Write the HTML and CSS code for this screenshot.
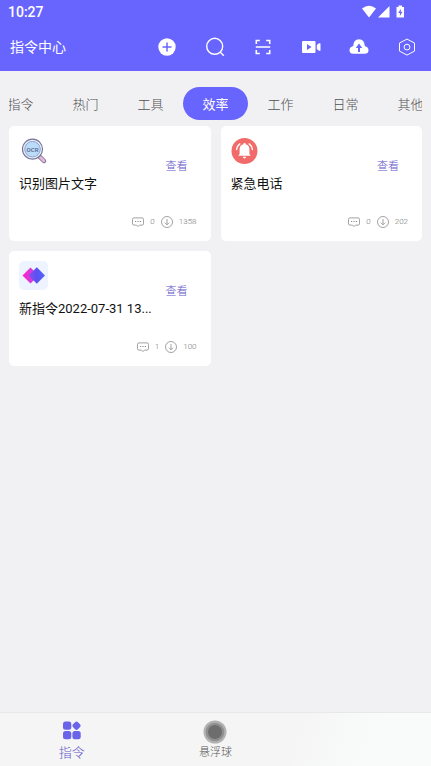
FILE: index.html
```html
<!DOCTYPE html>
<html lang="zh-CN">
<head>
<meta charset="utf-8">
<meta name="viewport" content="width=device-width, initial-scale=1">
<title>指令中心</title>
<link rel="stylesheet" href="styles.css">
</head>
<body>
<svg class="sprite" aria-hidden="true">
  <symbol id="comment" viewBox="0 0 12 12"><path d="M1.900 1.900h8.200q1.400 0 1.400 1.400v4.400q0 1.400-1.400 1.400H7.400L6 10.600 4.600 9.100H1.900Q.5 9.100.5 7.700V3.300Q.5 1.900 1.900 1.900z" fill="none" stroke="#8c8c8c" stroke-width=".8"/><path d="M3 5.500h1.200M5.400 5.500h1.200M7.800 5.500H9" stroke="#8c8c8c"/></symbol>
  <symbol id="download" viewBox="0 0 12 12"><circle cx="6" cy="6" r="5.500" fill="none" stroke="#8c8c8c" stroke-width=".8"/><path d="M6 3v5.800M3.900 6.700 6 8.800l2.100-2.100" fill="none" stroke="#8c8c8c" stroke-width=".8"/></symbol>
</svg>
<header class="header">
  <div class="status">
    <time>10:27</time>
    <svg class="status-icons" viewBox="0 0 44 14" fill="#fff" aria-hidden="true"><path d="M1 3.500Q8-1.800 15 3.500L8 12.500z"/><path d="M28.500 1v11.500H17z"/><path fill-rule="evenodd" d="M37.500.500h3.500V2h2v10.500h-7.500V2h2zM39.800 3.800 37.200 8h1.700v3l2.600-4.200h-1.700z"/></svg>
  </div>
  <div class="toolbar">
    <h1 class="page-title">指令中心</h1>
    <button class="tool" aria-label="添加"><svg viewBox="0 0 20 20"><circle cx="10" cy="10" r="8.700" fill="#fff"/><path d="M10 5.500v9M5.500 10h9" stroke="#6865ff" stroke-width="1.500"/></svg></button>
    <button class="tool" aria-label="搜索"><svg viewBox="0 0 20 20" fill="none" stroke="#fff" stroke-width="1.400"><circle cx="9.700" cy="9.300" r="8"/><path d="m15.300 15.200 3.500 3.600"/></svg></button>
    <button class="tool" aria-label="扫描"><svg viewBox="0 0 20 20" fill="none" stroke="#fff" stroke-width="1.600"><path d="M3.300 7V3.500h3.500M13.200 3.500h3.500V7M3.300 13v3.500h3.500M13.200 16.500h3.500V13M2.800 10h14.400"/></svg></button>
    <button class="tool" aria-label="录屏"><svg viewBox="0 0 20 20" fill="#fff"><path fill-rule="evenodd" d="M2 4h11.500q1 0 1 1v10q0 1-1 1H2q-1 0-1-1V5q0-1 1-1zM6 7v6l4.500-3z"/><path d="m15.800 8 2.200-1.700q1.500-.5 1.500.5v6.400q0 1-1.500.5L15.800 12z"/></svg></button>
    <button class="tool" aria-label="上传"><svg viewBox="0 0 20 20"><path d="M4.200 9Q4.500 2.500 10 2.200q5.500.3 5.800 6.800 3.700 1 3.700 4.200 0 3.600-4 3.600h-11q-4 0-4-3.600Q.5 10 4.200 9z" fill="#fff"/><path d="M10 15V10" stroke="#6865ff" stroke-width="2"/><path d="m10 6.500 3.200 4.500H6.800z" fill="#6865ff"/></svg></button>
    <button class="tool" aria-label="设置"><svg viewBox="0 0 20 20" fill="none" stroke="#fff"><path d="M10 2.100 17.500 6v8.100L10 18.100l-7.500-4V6z" stroke-linejoin="round"/><circle cx="10" cy="10.100" r="2.900"/></svg></button>
  </div>
</header>
<main class="content">
  <nav class="tabs" aria-label="分类">
    <button class="tab">指令</button>
    <button class="tab">热门</button>
    <button class="tab">工具</button>
    <button class="tab tab-active">效率</button>
    <button class="tab">工作</button>
    <button class="tab">日常</button>
    <button class="tab">其他</button>
  </nav>
  <section class="cards">
    <article class="card">
      <div class="info">
        <svg class="app-icon" viewBox="0 0 29 29" aria-hidden="true"><path d="m20.500 20.500 4.500 4.500" stroke="#75709b" stroke-width="4.500" stroke-linecap="round"/><path d="m21.500 21.500 3.300 3.300" stroke="#e8b7d7" stroke-width="3" stroke-linecap="round"/><circle cx="13.500" cy="13.200" r="10" fill="#eef4ff" stroke="#74769b" stroke-width="1.200"/><circle cx="13.500" cy="13.200" r="7.800" fill="#b9dcfb" stroke="#858bb4" stroke-width=".8"/><text x="13.500" y="15.500" text-anchor="middle" class="ocr-text">OCR</text></svg>
        <h2 class="card-title">识别图片文字</h2>
      </div>
      <button class="view">查看</button>
      <div class="meta"><svg><use href="#comment"/></svg><span>0</span><svg><use href="#download"/></svg><span>1358</span></div>
    </article>
    <article class="card">
      <div class="info">
        <svg class="app-icon" viewBox="0 0 29 29" aria-hidden="true"><circle cx="13.500" cy="15" r="13" fill="#f26b6b"/><g transform="translate(-1 .5)"><path d="M14.500 6.600q1.200 0 1.200 1.200 3.700 1 3.700 5.200v4.500l1.300 1.800H8.300l1.300-1.800V13q0-4.200 3.700-5.200 0-1.200 1.200-1.200zM12.800 20.300h3.400q-.3 1.700-1.700 1.700t-1.700-1.700z" fill="#fff"/><path d="M9.800 7.400Q7 9.500 6.600 13M19.200 7.400Q22 9.500 22.400 13" fill="none" stroke="#fff" stroke-width="1.400" stroke-linecap="round"/></g></svg>
        <h2 class="card-title">紧急电话</h2>
      </div>
      <button class="view">查看</button>
      <div class="meta"><svg><use href="#comment"/></svg><span>0</span><svg><use href="#download"/></svg><span>202</span></div>
    </article>
    <article class="card">
      <div class="info">
        <svg class="app-icon" viewBox="0 0 29 29" aria-hidden="true"><defs><linearGradient id="pink"><stop stop-color="#ff22ca"/><stop offset="1" stop-color="#b54be8"/></linearGradient><linearGradient id="blue"><stop stop-color="#8a4fe8"/><stop offset=".5" stop-color="#5b50f2"/><stop offset="1" stop-color="#5168f8"/></linearGradient></defs><rect width="29" height="29" rx="5" fill="#eef4ff"/><path d="m11.500 6.500 8 8-8 8-8-8z" fill="url(#pink)"/><path d="m17.800 6.300 8.200 8.200-8.200 8.200-8.200-8.200z" fill="url(#blue)"/></svg>
        <h2 class="card-title">新指令2022-07-31 13...</h2>
      </div>
      <button class="view">查看</button>
      <div class="meta"><svg><use href="#comment"/></svg><span>1</span><svg><use href="#download"/></svg><span>100</span></div>
    </article>
  </section>
</main>
<nav class="bottom-nav" aria-label="主导航">
  <a class="nav-item nav-active" href="#commands"><svg viewBox="0 0 24 24" fill="#6b63e8" aria-hidden="true"><rect x="3" y="1.500" width="8.300" height="8.300" rx="2.500"/><rect x="13" y="2.200" width="7" height="7" rx="2" transform="rotate(45 16.500 5.700)"/><rect x="3" y="10.900" width="8.300" height="8.300" rx="2.500"/><rect x="12.400" y="10.900" width="8.300" height="8.300" rx="2.500"/></svg><span>指令</span></a>
  <a class="nav-item" href="#ball"><svg viewBox="0 0 24 24" aria-hidden="true"><circle cx="12" cy="12" r="11.500" fill="#b2b2b2"/><circle cx="12" cy="12" r="9.300" fill="#909090"/><circle cx="12" cy="12" r="7" fill="#6d6d6d"/></svg><span>悬浮球</span></a>
</nav>
</body>
</html>
```
FILE: styles.css
```css
* {
  box-sizing: border-box;
}

body {
  margin: 0;
  min-height: 100vh;
  display: flex;
  flex-direction: column;
  background: #f1f1f4;
  color: #111;
  font-family: Roboto, "Noto Sans CJK SC", sans-serif;
  font-weight: 300;
}

button {
  margin: 0;
  padding: 0;
  border: 0;
  background: none;
  font: inherit;
  color: inherit;
  cursor: pointer;
}

h1,
h2 {
  margin: 0;
  font-weight: 400;
}

.sprite {
  position: absolute;
  width: 0;
  height: 0;
}

.header {
  padding-bottom: 1px;
  background: #6865ff;
  color: #fff;
}

.status {
  display: flex;
  align-items: center;
  justify-content: space-between;
  height: 24px;
  padding: 0 26px 0 8px;
  font-size: 14px;
  font-weight: 500;
}

.status-icons {
  width: 44px;
  height: 14px;
}

.toolbar {
  display: flex;
  height: 46px;
}

.page-title {
  flex: 1;
  padding-left: 10px;
  font-size: 14px;
  line-height: 46px;
  white-space: nowrap;
}

.tool {
  display: grid;
  place-items: center;
  width: 48px;
}

.tool svg {
  width: 20px;
  height: 20px;
}

.content {
  flex: 1;
  padding: 16px 9px;
}

.tabs {
  display: flex;
  justify-content: center;
  overflow: hidden;
}

.tab {
  flex: 0 0 65px;
  height: 33px;
  border-radius: 17px;
  color: #505050;
  font-size: 13px;
}

.tab-active {
  background: #6865ff;
  color: #fff;
  font-weight: 400;
}

.cards {
  display: grid;
  grid-template-columns: repeat(2, minmax(0, 1fr));
  gap: 10px;
  margin-top: 6px;
}

.card {
  display: grid;
  grid-template-columns: minmax(0, 1fr) 48px;
  padding: 10px 10px 13px;
  border-radius: 5px;
  background: #fff;
}

.app-icon {
  display: block;
  width: 29px;
  height: 29px;
}

.ocr-text {
  fill: #536084;
  font: 500 6px Roboto, sans-serif;
}

.card-title {
  margin-top: 9px;
  overflow: hidden;
  font-size: 13px;
  line-height: 20px;
  white-space: nowrap;
  text-overflow: ellipsis;
}

.view {
  color: #5f55c8;
  font-size: 11px;
}

.meta {
  grid-column: 1 / -1;
  display: flex;
  align-items: center;
  justify-content: flex-end;
  gap: 6px;
  margin-top: 22px;
  padding-right: 4px;
  color: #777;
  font-size: 8px;
  line-height: 12px;
}

.meta svg {
  width: 12px;
  height: 12px;
}

.bottom-nav {
  display: grid;
  grid-template-columns: repeat(3, 1fr);
  height: 54px;
  border-top: 1px solid #e8e8e9;
  background: linear-gradient(110deg, #f5f5f5 68%, #f9fbfa 85%);
}

.nav-item {
  display: flex;
  flex-direction: column;
  align-items: center;
  padding-top: 7px;
  color: #555;
  font-size: 11px;
  line-height: 18px;
  text-decoration: none;
}

.nav-item svg {
  width: 24px;
  height: 24px;
}

.nav-active {
  color: #5f55c8;
  font-size: 13px;
}
```
